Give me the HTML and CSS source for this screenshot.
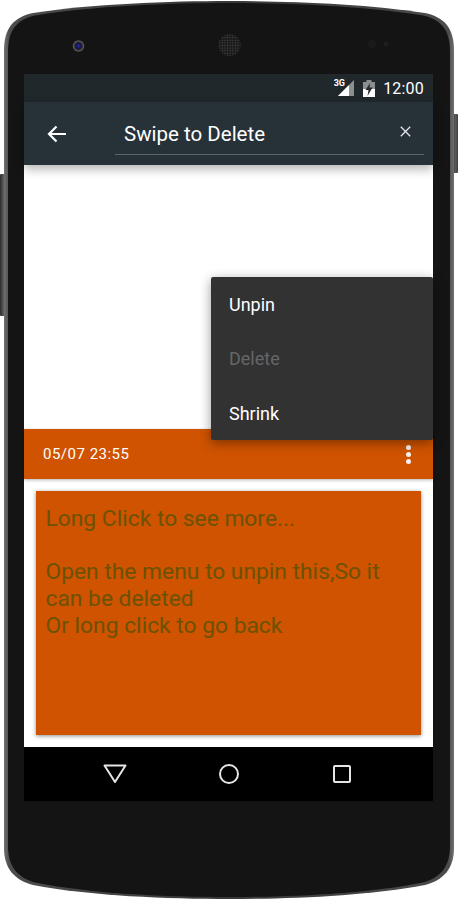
FILE: index.html
```html
<!DOCTYPE html>
<html lang="en">
<head>
<meta charset="utf-8">
<title>Swipe to Delete</title>
<link rel="stylesheet" href="styles.css">
</head>
<body>
<div class="device">
  <svg class="shell" width="458" height="900" viewBox="0 0 458 900" aria-hidden="true">
    <defs>
      <linearGradient id="rim" x1="0" y1="0" x2="1" y2="0">
        <stop offset="0" stop-color="#707070"/>
        <stop offset="0.012" stop-color="#4c4c4c"/>
        <stop offset="0.5" stop-color="#383838"/>
        <stop offset="0.988" stop-color="#4c4c4c"/>
        <stop offset="1" stop-color="#707070"/>
      </linearGradient>
      <linearGradient id="key" x1="0" y1="0" x2="1" y2="0">
        <stop offset="0" stop-color="#2c2c2c"/>
        <stop offset="0.6" stop-color="#5c5c5c"/>
        <stop offset="1" stop-color="#3c3c3c"/>
      </linearGradient>
      <radialGradient id="lens"><stop offset="0" stop-color="#2a2ab8"/><stop offset="0.4" stop-color="#14144a"/><stop offset="0.6" stop-color="#26262a"/><stop offset="0.85" stop-color="#5c5c5c"/><stop offset="1" stop-color="#2a2a2a"/></radialGradient>
      <pattern id="grille" width="2.6" height="2.6" patternUnits="userSpaceOnUse"><rect width="2.6" height="2.6" fill="#1a1a1a"/><circle cx="1.3" cy="1.3" r="0.7" fill="#4a4a4a"/></pattern>
    </defs>
    <rect x="0" y="174" width="6" height="142" rx="1" fill="url(#key)"/>
    <rect x="452" y="114" width="6" height="59" rx="1" fill="url(#key)"/>
    <path d="M4 50C4 28 14 17 33 13 90 4 170 1 229 1S368 4 425 13C444 17 454 28 454 50V848C454 868 444 880 425 885 368 896 290 899 229 899S90 896 33 885C14 880 4 868 4 848Z" fill="url(#rim)"/>
    <path d="M8 52C8 30 17 19.500 35 15.500 92 6 170 3 229 3S366 6 423 15.500C441 19.500 450 30 450 52V846C450 866 441 877.500 423 882.500 366 894 290 897 229 897S92 894 35 882.500C17 877.500 8 866 8 846Z" fill="#141414"/>
    <circle cx="78.500" cy="46" r="6" fill="url(#lens)"/>
    <circle cx="229.500" cy="45" r="11" fill="url(#grille)"/>
    <circle cx="372" cy="44" r="4" fill="#1a1a1a"/>
    <circle cx="386" cy="44" r="2.500" fill="#1e1e1e"/>
  </svg>
  <div class="screen">
    <div class="status">
      <span class="net">3G</span>
      <svg class="signal" width="16" height="16" viewBox="0 0 16 16" aria-hidden="true"><path d="M0 16 16 0V16Z" fill="#8c8f90"/><path d="M0 16 11 5V16Z" fill="#fff"/></svg>
      <svg class="battery" width="12" height="17" viewBox="0 0 12 17" aria-hidden="true"><path d="M3.500 0H8.500V2H12V17H0V2H3.500Z" fill="#8c8f90"/><path d="M0 9H12V17H0Z" fill="#fff"/><path d="M7 3 2.500 10H5.500L4.500 16 9.500 7.500H6.500Z" fill="#22292d"/></svg>
      <span class="clock">12:00</span>
    </div>
    <header class="appbar">
      <svg class="back" width="20" height="18" viewBox="0 0 20 18" aria-hidden="true"><path d="M19 9H2M9.500 1.500 2 9l7.500 7.500" fill="none" stroke="#fff" stroke-width="2.200"/></svg>
      <div class="search">
        <span class="query">Swipe to Delete</span>
        <svg class="clear" width="11" height="11" viewBox="0 0 11 11" aria-hidden="true"><path d="M.8.800 10.200 10.200M10.200.800.800 10.200" stroke="#e4e6e7" stroke-width="1.300" fill="none"/></svg>
      </div>
    </header>
    <main class="content">
      <div class="spacer"></div>
      <div class="card-head">
        <span class="stamp">05/07 23:55</span>
        <span class="dots"><i></i><i></i><i></i></span>
      </div>
      <div class="card-wrap">
        <div class="card-body">
          <p>Long Click to see more...</p>
          <p>&nbsp;</p>
          <p>Open the menu to unpin this,So it can be deleted</p>
          <p>Or long click to go back</p>
        </div>
      </div>
      <div class="menu">
        <div class="item">Unpin</div>
        <div class="item off">Delete</div>
        <div class="item">Shrink</div>
      </div>
    </main>
    <nav class="navbar">
      <svg width="24" height="20" viewBox="0 0 24 20" aria-hidden="true"><path d="M1.500 1.500H22.500L12 18Z" fill="none" stroke="#e6e6e6" stroke-width="2" stroke-linejoin="round"/></svg>
      <svg width="22" height="22" viewBox="0 0 22 22" aria-hidden="true"><circle cx="11" cy="11" r="9" fill="none" stroke="#e6e6e6" stroke-width="2"/></svg>
      <svg width="20" height="20" viewBox="0 0 20 20" aria-hidden="true"><rect x="2" y="2" width="16" height="16" rx="1" fill="none" stroke="#e6e6e6" stroke-width="2"/></svg>
    </nav>
  </div>
</div>
</body>
</html>
```
FILE: styles.css
```css
* { box-sizing: border-box; }
html, body { margin: 0; padding: 0; background: #fff; }
body { font-family: Roboto, "Liberation Sans", sans-serif; overflow: hidden; }
.device { position: relative; width: 458px; height: 900px; padding: 74px 25px 0 24px; }
.shell { position: absolute; left: 0; top: 0; }
.screen { position: relative; width: 409px; height: 727px; display: flex; flex-direction: column; }
.status { height: 28px; background: #21282c; display: flex; align-items: center; justify-content: flex-end; color: #fff; padding-right: 9px; position: relative; }
.net { font-size: 9px; font-weight: 700; position: absolute; right: 88px; top: 4px; }
.signal { margin-right: 9px; }
.battery { margin-right: 8px; }
.clock { font-size: 16px; letter-spacing: .2px; }
.appbar { height: 63px; background: #263238; display: flex; align-items: flex-start; padding-left: 23px; position: relative; z-index: 2; box-shadow: 0 4px 10px rgba(0,0,0,.3); }
.back { margin-top: 23px; flex: none; }
.search { margin-left: 48px; width: 309px; height: 53px; border-bottom: 1px solid #59646b; display: flex; align-items: center; justify-content: space-between; padding: 12px 13px 0 9px; }
.query { font-size: 20.500px; color: #fff; }
.clear { margin-top: -5px; }
.content { flex: 1; background: #fff; position: relative; display: flex; flex-direction: column; min-height: 0; }
.spacer { height: 264px; flex: none; }
.card-head { height: 50px; flex: none; background: #cf5300; display: flex; align-items: center; justify-content: space-between; padding: 0 22.500px 0 19px; box-shadow: 0 1px 3px rgba(0,0,0,.3); }
.stamp { font-size: 15px; color: #fff; letter-spacing: .5px; }
.dots { display: flex; flex-direction: column; gap: 2px; }
.dots i { display: block; width: 5px; height: 5px; border-radius: 50%; background: #f4f1ee; }
.card-wrap { flex: 1; padding: 12px; min-height: 0; }
.card-body { height: 244px; background: #cf5300; box-shadow: 0 1px 4px rgba(0,0,0,.45); padding: 15px 9.500px; color: #6b5200; font-size: 22.800px; line-height: 26.700px; }
.card-body p { margin: 0; }
.menu { position: absolute; right: 0; top: 112px; width: 222px; height: 163px; background: #323232; border-radius: 2px; box-shadow: 0 3px 12px rgba(0,0,0,.4); display: flex; flex-direction: column; justify-content: center; z-index: 3; }
.item { height: 54.500px; display: flex; align-items: center; padding-left: 18px; color: #fff; font-size: 18px; padding-top: 1px; }
.item.off { color: #666; }
.navbar { height: 54px; flex: none; background: #000; display: grid; grid-template-columns: repeat(3, 113.500px); justify-content: center; justify-items: center; align-items: center; }
```
